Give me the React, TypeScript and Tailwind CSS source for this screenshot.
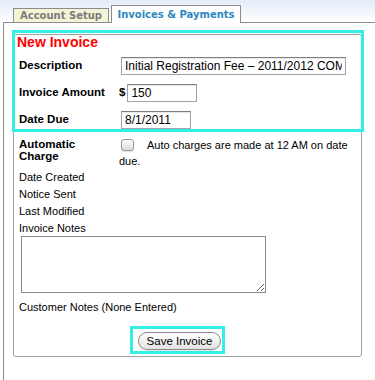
export default function App() {
  const inputCls =
    "h-[18px] border border-[#a3a3a3] border-t-[#7f7f7f] bg-white px-[3px] text-[12px] leading-[16px] text-black shadow-[inset_0_1px_1px_rgba(0,0,0,0.10)] outline-none";
  return (
    <div className="w-[375px] h-[380px] overflow-hidden bg-white font-['Liberation_Sans',Arial,sans-serif] text-black">
      {/* header with tabs */}
      <div className="h-[22px] bg-linear-to-b from-[#e3ecf8] to-white flex items-end pl-[13px] gap-[2px]">
        <div className="h-[14px] w-[96px] border border-b-0 border-[#8c8c8c] bg-[#f5f3d6] text-center pt-[1px] leading-[11px] text-[10px] font-bold text-[#7b7b7b] font-['DejaVu_Sans',sans-serif]">
          Account Setup
        </div>
        <div className="relative z-10 -mb-px h-[18px] w-[130px] border border-b-0 border-[#8c8c8c] bg-white text-center pt-[4px] leading-[10px] text-[10px] font-bold text-[#2d87c1] font-['DejaVu_Sans',sans-serif]">
          Invoices &amp; Payments
        </div>
      </div>

      {/* body */}
      <div className="ml-[3px] h-[358px] border-l border-t border-[#8c8c8c] pt-[11px] pl-[9px]">
        <div className="relative w-[349px] rounded-[3px] border border-[#a0a0a0] px-[5px] pb-[2px]">
          {/* highlight overlay */}
          <div className="pointer-events-none absolute left-[-2px] top-[-5px] w-[352px] h-[102px] border-[3px] border-[#33efe6]" />

          <div className="-ml-[2px] text-[14px] leading-[15px] font-bold text-[#ff0000]">New Invoice</div>

          <div className="mt-[7px] flex flex-col gap-[9px]">
            <div className="flex h-[18px] items-center">
              <div className="w-[100px] text-[11.5px] font-bold">Description</div>
              <input
                readOnly
                value="Initial Registration Fee – 2011/2012 COMPETITIVE"
                className={`${inputCls} ml-[2px] w-[225px]`}
              />
            </div>
            <div className="flex h-[18px] items-center">
              <div className="w-[100px] text-[11.5px] font-bold">Invoice Amount</div>
              <span className="text-[11.5px] font-bold">$</span>
              <input readOnly value="150" className={`${inputCls} ml-[2px] w-[70px]`} />
            </div>
            <div className="flex h-[18px] items-center">
              <div className="w-[100px] text-[11.5px] font-bold">Date Due</div>
              <input readOnly value="8/1/2011" className={`${inputCls} ml-[2px] w-[70px]`} />
            </div>
          </div>

          <div className="mt-[8px] flex items-start">
            <div className="w-[100px] pt-[1px] text-[11.5px] leading-[12px] font-bold">
              Automatic
              <br />
              Charge
            </div>
            <div className="w-[232px] text-[11px] leading-[16px]">
              <span className="inline-block align-top mt-[2px] ml-[2px] mr-[13px] h-[12px] w-[13px] rounded-[3px] border border-[#9a9a9a] bg-linear-to-b from-white to-[#dadada] shadow-[0_1px_1px_rgba(0,0,0,0.12)]" />
              Auto charges are made at 12 AM on date due.
            </div>
          </div>

          <div className="text-[11px] leading-[17px]">Date Created</div>
          <div className="text-[11px] leading-[17px]">Notice Sent</div>
          <div className="text-[11px] leading-[17px]">Last Modified</div>
          <div className="text-[11px] leading-[16px]">Invoice Notes</div>
          <textarea
            readOnly
            className="ml-[2px] block h-[57px] w-[245px] border border-[#8a8a8a] bg-white outline-none"
          />
          <div className="mt-[6px] text-[11px] leading-[17px]">Customer Notes (None Entered)</div>

          <div className="mt-[10px] ml-[111px] w-fit border-[3px] border-[#33efe6] pl-[5px] pr-[1px] pt-[3px] pb-[1px]">
            <button className="flex h-[18px] w-[83px] items-center justify-center rounded-full border border-[#8a8a8a] bg-linear-to-b from-white to-[#e2e2e2] text-[11.5px] leading-[14px] text-black shadow-[0_1px_1px_rgba(0,0,0,0.10)]">
              Save Invoice
            </button>
          </div>
        </div>
      </div>
    </div>
  );
}
